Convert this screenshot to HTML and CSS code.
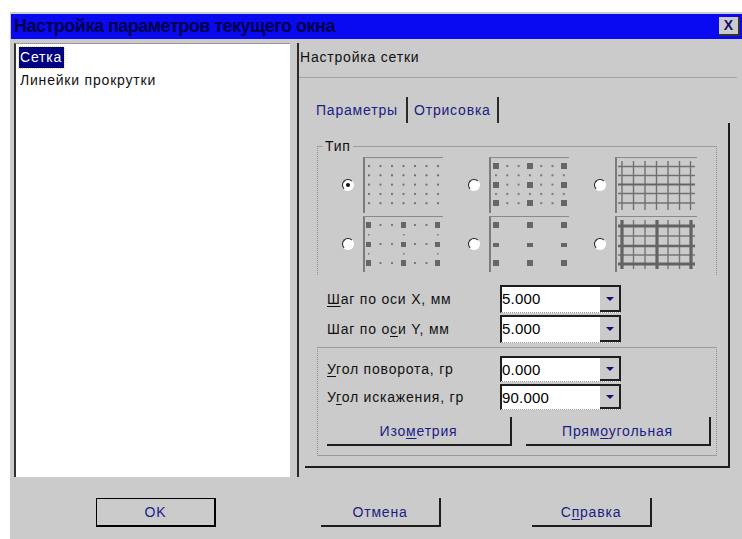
FILE: index.html
```html
<!DOCTYPE html>
<html lang="ru">
<head>
<meta charset="utf-8">
<title>Настройка параметров текущего окна</title>
<link rel="stylesheet" href="styles.css">
</head>
<body>
<div class="dialog">
  <div class="titlebar">
    <span class="title">Настройка параметров текущего окна</span>
    <span class="close">X</span>
  </div>

  <div class="body">
    <div class="tree">
      <div class="item"><span class="sel">Сетка</span></div>
      <div class="item">Линейки прокрутки</div>
    </div>

    <div class="panel">
      <div class="panel-head">Настройка сетки</div>
      <div class="tabs">
        <span class="tab tab-params">Параметры</span>
        <span class="tab tab-draw">Отрисовка</span>
      </div>

      <div class="page">
        <div class="group group-type">
          <span class="group-label">Тип</span>
          <div class="types">
            <div class="type">
              <span class="radio checked"></span>
              <span class="preview">
                <svg width="78" height="55" viewBox="0 0 78 55">
                  <defs>
                    <pattern id="p1" x="3" y="7" width="11.5" height="9.3" patternUnits="userSpaceOnUse">
                      <rect width="2" height="2" fill="#6f6f6f"/>
                    </pattern>
                  </defs>
                  <rect x="0" y="0" width="76" height="48" fill="url(#p1)"/>
                </svg>
              </span>
            </div>
            <div class="type">
              <span class="radio"></span>
              <span class="preview">
                <svg width="78" height="55" viewBox="0 0 78 55">
                  <defs>
                    <pattern id="p2" x="4" y="7" width="11.3" height="9.3" patternUnits="userSpaceOnUse">
                      <rect width="2" height="2" fill="#777"/>
                    </pattern>
                  </defs>
                  <rect x="0" y="0" width="76" height="48" fill="url(#p2)"/>
                  <g fill="#666">
                    <rect x="2" y="5" width="6" height="6"/><rect x="36" y="5" width="6" height="6"/><rect x="70" y="5" width="6" height="6"/>
                    <rect x="2" y="24" width="6" height="6"/><rect x="36" y="24" width="6" height="6"/><rect x="70" y="24" width="6" height="6"/>
                    <rect x="2" y="42" width="6" height="6"/><rect x="36" y="42" width="6" height="6"/><rect x="70" y="42" width="6" height="6"/>
                  </g>
                </svg>
              </span>
            </div>
            <div class="type">
              <span class="radio"></span>
              <span class="preview">
                <svg width="80" height="55" viewBox="0 0 80 55">
                  <g stroke="#707070" stroke-width="1.4">
                    <line x1="5" y1="3" x2="5" y2="52"/><line x1="16.5" y1="3" x2="16.5" y2="52"/>
                    <line x1="28" y1="3" x2="28" y2="52"/><line x1="39.5" y1="3" x2="39.5" y2="52"/>
                    <line x1="51" y1="3" x2="51" y2="52"/><line x1="62.5" y1="3" x2="62.5" y2="52"/>
                    <line x1="73.5" y1="3" x2="73.5" y2="52"/>
                    <line x1="1" y1="8.5" x2="78" y2="8.5"/><line x1="1" y1="17.5" x2="78" y2="17.5"/>
                    <line x1="1" y1="35.5" x2="78" y2="35.5"/><line x1="1" y1="45" x2="78" y2="45"/>
                  </g>
                  <line x1="1" y1="26.5" x2="78" y2="26.5" stroke="#666" stroke-width="2.2"/>
                </svg>
              </span>
            </div>

            <div class="type">
              <span class="radio"></span>
              <span class="preview">
                <svg width="78" height="55" viewBox="0 0 78 55">
                  <defs>
                    <pattern id="p4" x="3" y="7" width="11.5" height="19" patternUnits="userSpaceOnUse">
                      <rect width="2" height="2" fill="#777"/>
                    </pattern>
                  </defs>
                  <rect x="0" y="0" width="76" height="48" fill="url(#p4)"/>
                  <g fill="#777">
                    <rect x="3" y="17" width="1.5" height="1.5"/><rect x="38" y="17" width="1.5" height="1.5"/><rect x="72" y="17" width="1.5" height="1.5"/>
                    <rect x="3" y="36" width="1.5" height="1.5"/><rect x="38" y="36" width="1.5" height="1.5"/><rect x="72" y="36" width="1.5" height="1.5"/>
                  </g>
                  <g fill="#666">
                    <rect x="1" y="5" width="5" height="6"/><rect x="36" y="5" width="5" height="6"/><rect x="70" y="5" width="5" height="6"/>
                    <rect x="1" y="25" width="5" height="5"/><rect x="36" y="25" width="5" height="5"/><rect x="70" y="25" width="5" height="5"/>
                    <rect x="1" y="43" width="5" height="6"/><rect x="36" y="43" width="5" height="6"/><rect x="70" y="43" width="5" height="6"/>
                  </g>
                </svg>
              </span>
            </div>
            <div class="type">
              <span class="radio"></span>
              <span class="preview">
                <svg width="78" height="55" viewBox="0 0 78 55">
                  <g fill="#666">
                    <rect x="2" y="5" width="6" height="6"/><rect x="36" y="5" width="6" height="6"/><rect x="70" y="5" width="6" height="6"/>
                    <rect x="2" y="26" width="6" height="4"/><rect x="36" y="26" width="6" height="4"/><rect x="70" y="26" width="6" height="4"/>
                    <rect x="2" y="43" width="6" height="6"/><rect x="36" y="43" width="6" height="6"/><rect x="70" y="43" width="6" height="6"/>
                  </g>
                </svg>
              </span>
            </div>
            <div class="type">
              <span class="radio"></span>
              <span class="preview">
                <svg width="80" height="55" viewBox="0 0 80 55">
                  <g stroke="#767676" stroke-width="1.4">
                    <line x1="16.5" y1="3" x2="16.5" y2="52"/><line x1="28" y1="3" x2="28" y2="52"/>
                    <line x1="51" y1="3" x2="51" y2="52"/><line x1="62.5" y1="3" x2="62.5" y2="52"/>
                    <line x1="1" y1="19" x2="78" y2="19"/><line x1="1" y1="38" x2="78" y2="38"/>
                  </g>
                  <g stroke="#636363" stroke-width="3.2">
                    <line x1="5" y1="3" x2="5" y2="52"/><line x1="40" y1="3" x2="40" y2="52"/>
                    <line x1="74" y1="3" x2="74" y2="52"/>
                    <line x1="1" y1="9" x2="78" y2="9"/><line x1="1" y1="47" x2="78" y2="47"/>
                  </g>
                  <line x1="1" y1="29" x2="78" y2="29" stroke="#666" stroke-width="2.4"/>
                </svg>
              </span>
            </div>
          </div>
        </div>

        <div class="fields">
          <label class="label"><u>Ш</u>аг по оси X, мм</label>
          <span class="combo"><span class="combo-value">5.000</span><span class="combo-btn"></span></span>
          <label class="label">Шаг по о<u>с</u>и Y, мм</label>
          <span class="combo"><span class="combo-value">5.000</span><span class="combo-btn"></span></span>
        </div>

        <div class="group group-angle">
          <div class="fields angle-fields">
            <label class="label"><u>У</u>гол поворота, гр</label>
            <span class="combo"><span class="combo-value">0.000</span><span class="combo-btn"></span></span>
            <label class="label">У<u>г</u>ол искажения, гр</label>
            <span class="combo"><span class="combo-value">90.000</span><span class="combo-btn"></span></span>
          </div>
          <div class="angle-buttons">
            <span class="btn">Изо<u>м</u>етрия</span>
            <span class="btn">Прям<u>о</u>угольная</span>
          </div>
        </div>
      </div>
    </div>
  </div>

  <div class="footer">
    <span class="btn btn-default btn-ok">OK</span>
    <span class="btn btn-cancel">Отмена</span>
    <span class="btn btn-help">С<u>п</u>равка</span>
  </div>
</div>
</body>
</html>
```

FILE: styles.css
```css
* { box-sizing: border-box; }

html, body {
  margin: 0;
  padding: 0;
  background: #ffffff;
}

body {
  font-family: "Liberation Sans", Arial, sans-serif;
  font-size: 14px;
  letter-spacing: 0.8px;
  color: #111;
  overflow: hidden;
}

u { text-decoration-thickness: 1px; text-underline-offset: 2px; }

/* window frame */
.dialog {
  margin: 12px 0 0 10px;
  height: 527px;
  background: #cbcbcb;
  padding: 2px 0 0 1px;
  display: flex;
  flex-direction: column;
}

.titlebar {
  height: 25px;
  background: #0a0af2;
  display: flex;
  align-items: center;
  justify-content: space-between;
  padding: 0 2px 0 3px;
}

.title {
  font-family: "Liberation Sans", Arial, sans-serif;
  font-weight: bold;
  font-size: 18px;
  letter-spacing: -0.5px;
  color: #00004a;
}

.close {
  width: 21px;
  height: 19px;
  background: #cbcbcb;
  border-right: 2px solid #333;
  border-bottom: 2px solid #333;
  color: #10106a;
  font-weight: bold;
  font-size: 14px;
  letter-spacing: 0;
  line-height: 17px;
  text-align: center;
}

/* main area */
.body {
  display: flex;
  margin-top: 4px;
  height: 434px;
}

.tree {
  margin-left: 3px;
  width: 276px;
  background: #fff;
  border-left: 2px solid #333;
  border-top: 1px solid #9a9a9a;
  padding: 3px 0 0 2px;
}

.item {
  height: 23px;
  line-height: 21px;
  padding-left: 2px;
}

.sel {
  display: inline-block;
  background: #000080;
  color: #fff;
  padding: 0 2px 0 1px;
  outline: 1px dotted #e8e060;
  margin-left: -1px;
}

.panel {
  margin-left: 7px;
  width: 443px;
  border-left: 2px solid #2a2a2a;
  display: flex;
  flex-direction: column;
}

.panel-head {
  height: 35px;
  margin-right: 3px;
  padding: 6px 0 0 1px;
  line-height: 16px;
  border-bottom: 1px solid #a4a4a4;
}

/* tabs */
.tabs {
  display: flex;
  margin: 19px 0 0 6px;
  height: 26px;
}

.tab {
  color: #1c1c84;
  border-right: 2px solid #2a2a2a;
  line-height: 26px;
  white-space: nowrap;
}

.tab-params { width: 103px; padding-left: 11px; }
.tab-draw { width: 91px; padding-left: 6px; }

.page {
  margin-left: 6px;
  width: 425px;
  height: 345px;
  border-right: 2px solid #1e1e1e;
  border-bottom: 2px solid #1e1e1e;
  padding-top: 23px;
}

/* group boxes */
.group {
  margin-left: 12px;
  width: 400px;
  border-top: 1px solid #9c9c9c;
  border-left: 1px dotted #8c8c8c;
  border-right: 1px dotted #8c8c8c;
}

.group-type {
  height: 129px;
}

.group-label {
  display: block;
  width: fit-content;
  margin: -9px 0 0 5px;
  padding: 0 2px;
  height: 16px;
  line-height: 16px;
  background: #cbcbcb;
}

.types {
  display: grid;
  grid-template-columns: 126px 126px 126px;
  grid-auto-rows: 56px;
  row-gap: 3px;
  margin-top: 3px;
  padding-left: 24px;
}

.type {
  display: flex;
  align-items: center;
  gap: 9px;
}

.radio {
  width: 12px;
  height: 12px;
  border-radius: 50%;
  background: #fff;
  border: 1.5px solid #fff;
  border-top-color: #1a1a1a;
  border-left-color: #1a1a1a;
  display: flex;
  align-items: center;
  justify-content: center;
  flex: none;
}

.radio.checked::after {
  content: "";
  width: 4px;
  height: 4px;
  border-radius: 50%;
  background: #111;
}

.preview {
  align-self: stretch;
  border-top: 1px solid #8a8a8a;
  border-left: 2px solid #7c7c7c;
  display: block;
  line-height: 0;
}

.preview svg { display: block; }

/* combo fields */
.fields {
  display: grid;
  grid-template-columns: 173px 121px;
  grid-auto-rows: 28px;
  row-gap: 2px;
  margin: 10px 0 0 22px;
  align-items: center;
}

.label { white-space: nowrap; }

.combo {
  height: 100%;
  display: flex;
  background: #fff;
  border-top: 2px solid #1e1e1e;
  border-left: 2px solid #1e1e1e;
  border-bottom: 1px dotted #999;
}

.combo-value {
  flex: 1;
  line-height: 24px;
  font-size: 15px;
  letter-spacing: 0.2px;
  color: #000;
}

.combo-btn {
  width: 21px;
  background: #cbcbcb;
  border-right: 2px solid #1e1e1e;
  border-bottom: 2px solid #1e1e1e;
  display: flex;
  align-items: center;
  justify-content: center;
}

.combo-btn::after {
  content: "";
  border-left: 4px solid transparent;
  border-right: 4px solid transparent;
  border-top: 4px solid #10107a;
}

.group-angle {
  margin-top: 4px;
  height: 109px;
  border-bottom: 1px solid #9c9c9c;
  padding: 8px 0 0 9px;
}

.angle-fields {
  margin: 0;
  grid-auto-rows: 26px;
}

.angle-buttons {
  display: flex;
  gap: 14px;
  margin-top: 7px;
}

/* buttons */
.btn {
  display: flex;
  align-items: center;
  justify-content: center;
  width: 185px;
  height: 29px;
  color: #1c1c84;
  border-right: 2px solid #1e1e1e;
  border-bottom: 2px solid #1e1e1e;
}

.footer {
  display: flex;
  padding: 21px 0 0 85px;
}

.footer .btn { width: 120px; }

.btn-default {
  border: 1px solid #000;
  border-right: 2px solid #000;
  border-bottom: 2px solid #000;
}

.btn-cancel { margin-left: 105px; }
.btn-help { margin-left: 91px; }
```
